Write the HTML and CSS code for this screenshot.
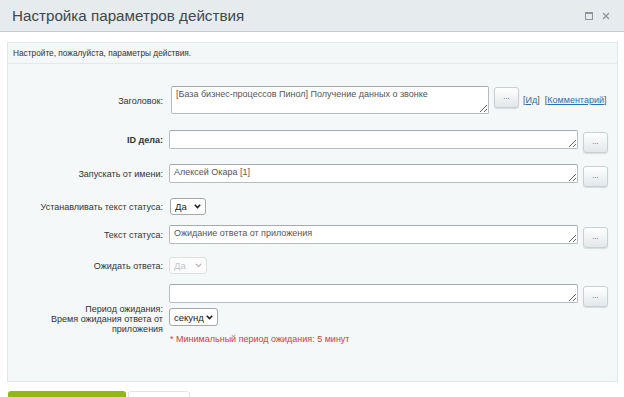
FILE: index.html
```html
<!DOCTYPE html>
<html lang="ru">
<head>
<meta charset="utf-8">
<title>Настройка параметров действия</title>
<link rel="stylesheet" href="styles.css">
</head>
<body>
<div class="header">
  <div class="title">Настройка параметров действия</div>
  <div class="hicons">
    <span class="ico-max"></span>
    <svg class="ico-close" width="8" height="8" viewBox="0 0 8 8"><path d="M1 1L7 7M7 1L1 7" stroke="#8a949a" stroke-width="1.3"/></svg>
  </div>
</div>
<div class="content">
  <div class="panel">
    <div class="intro">Настройте, пожалуйста, параметры действия.</div>
    <div class="form">
      <div class="row row-first">
        <div class="label tall">Заголовок:</div>
        <div class="field">
          <textarea class="ta ta-title">[База бизнес-процессов Пинол] Получение данных о звонке</textarea>
          <button class="dots">...</button>
          <span class="links">[<a href="#">Ид</a>] &nbsp;[<a href="#">Комментарий</a>]</span>
        </div>
      </div>
      <div class="row">
        <div class="label bold">ID дела:</div>
        <div class="field">
          <textarea class="ta"></textarea>
          <button class="dots">...</button>
        </div>
      </div>
      <div class="row">
        <div class="label">Запускать от имени:</div>
        <div class="field">
          <textarea class="ta">Алексей Окара [1]</textarea>
          <button class="dots">...</button>
        </div>
      </div>
      <div class="row row-sel row-gap10">
        <div class="label sel">Устанавливать текст статуса:</div>
        <div class="field">
          <span class="sel-wrap">
            <select class="sel-box"><option>Да</option><option>Нет</option></select>
            <svg class="chev" width="7" height="5" viewBox="0 0 7 5"><path d="M0.8 0.8L3.5 3.6L6.2 0.8" fill="none" stroke="#222" stroke-width="1.6"/></svg>
          </span>
        </div>
      </div>
      <div class="row row-gap9">
        <div class="label">Текст статуса:</div>
        <div class="field">
          <textarea class="ta">Ожидание ответа от приложения</textarea>
          <button class="dots">...</button>
        </div>
      </div>
      <div class="row row-sel row-gap10">
        <div class="label sel">Ожидать ответа:</div>
        <div class="field">
          <span class="sel-wrap">
            <select class="sel-box sel-dis" disabled><option>Да</option></select>
            <svg class="chev" width="7" height="5" viewBox="0 0 7 5"><path d="M0.8 0.8L3.5 3.6L6.2 0.8" fill="none" stroke="#b5b5b5" stroke-width="1.1"/></svg>
          </span>
        </div>
      </div>
      <div class="row row-period">
        <div class="label multi">Период ожидания:<br>Время ожидания ответа от приложения</div>
        <div class="field col">
          <div class="line">
            <textarea class="ta"></textarea>
            <button class="dots">...</button>
          </div>
          <span class="sel-wrap sel-unit-wrap">
            <select class="sel-box sel-unit"><option>секунд</option><option>минут</option><option>часов</option><option>дней</option></select>
            <svg class="chev" width="7" height="5" viewBox="0 0 7 5"><path d="M0.8 0.8L3.5 3.6L6.2 0.8" fill="none" stroke="#222" stroke-width="1.6"/></svg>
          </span>
          <div class="note">* Минимальный период ожидания: 5 минут</div>
        </div>
      </div>
    </div>
  </div>
  <div class="buttons">
    <button class="btn-save">Сохранить</button>
    <button class="btn-cancel">Отменить</button>
  </div>
</div>
</body>
</html>
```
FILE: styles.css
```css
html, body {
  margin: 0;
  padding: 0;
  background: #fff;
  font-family: "Liberation Sans", Arial, sans-serif;
  color: #333;
  overflow: hidden;
}
.header {
  height: 31px;
  background: #e6ecee;
  border-bottom: 1px solid #c3ccd0;
  display: flex;
  align-items: center;
  justify-content: space-between;
  padding: 0 12px;
}
.title {
  font-size: 15.2px;
  color: #40484d;
}
.hicons {
  display: flex;
  align-items: center;
  gap: 9px;
  padding-right: 2px;
}
.ico-max {
  width: 6px;
  height: 5px;
  border: 1px solid #8a949a;
  border-top-width: 2px;
}
.content {
  padding: 10px 6px 0 7px;
}
.panel {
  border: 1px solid #e1e7e9;
  background: #f5f8f9;
  height: 338px;
}
.intro {
  font-size: 8.3px;
  line-height: 20px;
  padding-left: 5px;
  border-bottom: 1px solid #e3e8ea;
  color: #333;
  background: #f4f7f8;
}
.form {
  padding-top: 22px;
  font-size: 9px;
}
.row {
  display: flex;
  align-items: flex-start;
  margin-bottom: 11px;
}
.row-first {
  margin-bottom: 14px;
}
.row-sel {
  margin-bottom: 9px;
}
.row-gap10 {
  margin-bottom: 10px;
}
.row-gap9 {
  margin-bottom: 9px;
}
.label {
  width: 155px;
  padding-right: 6px;
  text-align: right;
  color: #333;
  height: 19px;
  display: flex;
  align-items: center;
  justify-content: flex-end;
  flex-shrink: 0;
}
.label.tall { height: 30px; }
.label.sel { height: 17px; }
.label.bold { font-weight: bold; }
.label.multi {
  height: auto;
  display: block;
  line-height: 9.8px;
  padding-top: 21px;
}
.field {
  display: flex;
  align-items: flex-start;
}
.field.col {
  flex-direction: column;
  align-items: flex-start;
}
.line {
  display: flex;
  align-items: flex-start;
}
.ta {
  width: 409px;
  height: 19px;
  box-sizing: border-box;
  border: 1px solid #b6bcbf;
  border-top-color: #a3a9ad;
  border-radius: 2px;
  background: #fff;
  font-family: "Liberation Sans", Arial, sans-serif;
  font-size: 9px;
  color: #555;
  padding: 2px 4px;
  margin: 0;
  resize: vertical;
  overflow: hidden;
  display: block;
}
.ta-title {
  width: 318px;
  height: 28px;
  margin-left: 2px;
}
.dots {
  width: 25px;
  height: 21px;
  margin: 2px 0 0 5px;
  padding: 0 0 3px;
  border: 1px solid #c9d0d3;
  border-radius: 3px;
  background: linear-gradient(#ffffff, #e2e7e9);
  box-shadow: 0 1px 1px rgba(0,0,0,0.12);
  font-size: 8px;
  color: #555;
  font-family: "Liberation Sans", Arial, sans-serif;
}
.row-first .dots {
  margin-top: 1px;
}
.links {
  margin-left: 4px;
  line-height: 28px;
  color: #555;
  font-size: 9px;
}
.links a {
  color: #2a6fb4;
}
.sel-wrap {
  position: relative;
  display: block;
  height: 17px;
}
.sel-box {
  appearance: none;
  -webkit-appearance: none;
  display: block;
  height: 17px;
  width: 36px;
  box-sizing: border-box;
  font-size: 9.5px;
  font-family: "Liberation Sans", Arial, sans-serif;
  border: 1px solid #a7a7a7;
  border-radius: 3px;
  background: #fff;
  color: #222;
  padding: 0 0 0 4px;
  margin: 0 0 0 1px;
}
.sel-dis {
  width: 38px;
  margin-left: 0;
  color: #b0b0b0;
  border-color: #d6d6d6;
}
.chev {
  position: absolute;
  right: 5px;
  top: 6px;
  pointer-events: none;
}
.sel-unit-wrap {
  margin-top: 1px;
  height: 18px;
}
.sel-unit {
  width: 49px;
  height: 18px;
  margin-left: 0;
}
.sel-unit-wrap .chev {
  top: 7px;
}
.note {
  color: #d6393c;
  font-size: 9px;
  margin-top: 8px;
  padding-left: 1px;
}
.buttons {
  display: flex;
  gap: 2px;
  margin-top: 9px;
  padding-left: 1px;
}
.btn-save {
  width: 118px;
  height: 44px;
  border: none;
  border-radius: 3px 3px 0 0;
  background: #93b816;
  color: #fff;
  font-size: 11px;
  padding-top: 16px;
}
.btn-cancel {
  width: 62px;
  height: 44px;
  border: 1px solid #dfe3e5;
  border-radius: 3px 3px 0 0;
  background: #fff;
  color: #555;
  font-size: 11px;
  padding-top: 16px;
}
```
